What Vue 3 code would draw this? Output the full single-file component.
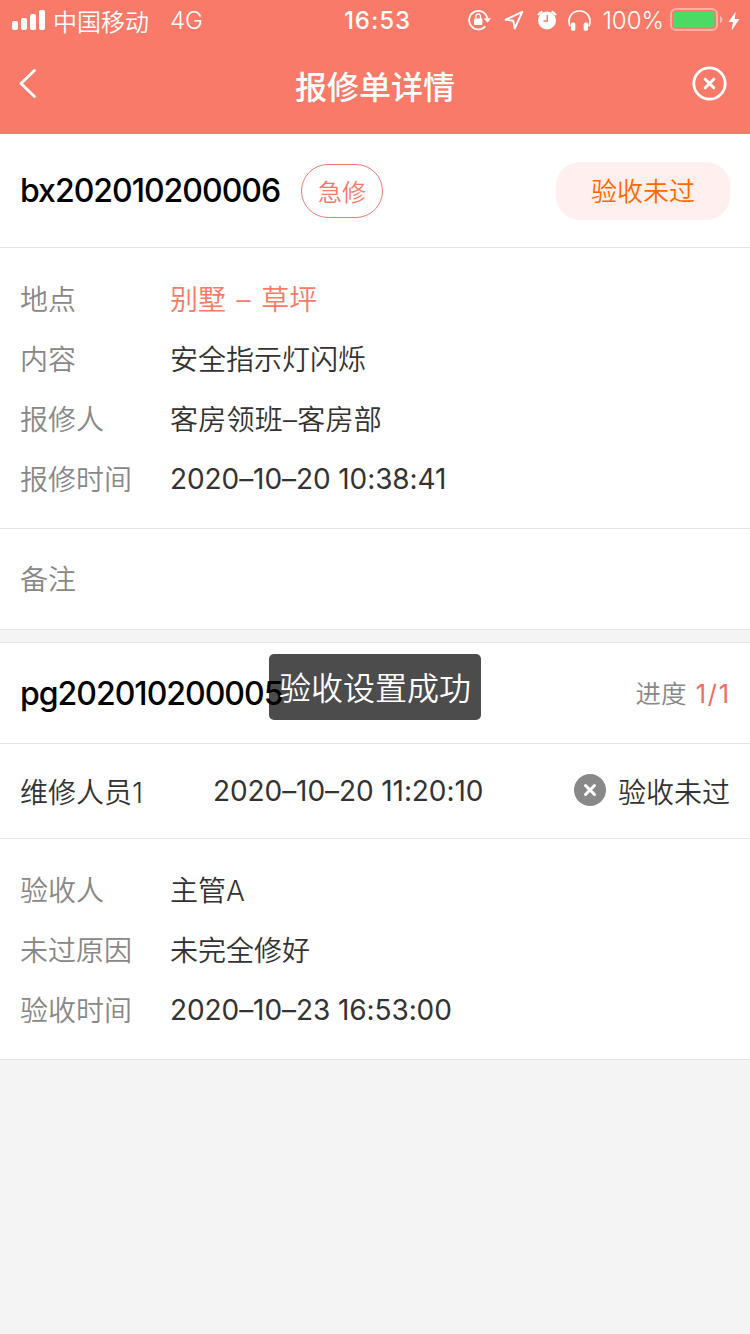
<script setup>
import { ref } from 'vue'

const order = ref({
  no: 'bx202010200006',
  level: '急修',
  status: '验收未过',
  remarkLabel: '备注'
})

const orderInfo = ref([
  { label: '地点', value: '别墅 – 草坪', type: 'link' },
  { label: '内容', value: '安全指示灯闪烁' },
  { label: '报修人', value: '客房领班–客房部', type: 'person' },
  { label: '报修时间', value: '2020–10–20 10:38:41', type: 'num' }
])

const dispatch = ref({
  no: 'pg202010200005',
  progress: '1/1',
  time: '2020–10–20 11:20:10',
  result: '验收未过'
})

const checkInfo = ref([
  { label: '验收人', value: '主管A' },
  { label: '未过原因', value: '未完全修好' },
  { label: '验收时间', value: '2020–10–23 16:53:00', type: 'num' }
])

const toast = ref('验收设置成功')
</script>

<template>
  <div class="page">
    <header class="header">
      <div class="status-bar">
        <div class="status-left">
          <svg class="signal" width="34" height="20" viewBox="0 0 34 20" fill="#fff">
            <rect x="0" y="11" width="6" height="9" rx="2" />
            <rect x="9" y="8" width="6" height="12" rx="2" />
            <rect x="18" y="4" width="6" height="16" rx="2" />
            <rect x="27" y="0" width="6" height="20" rx="2" />
          </svg>
          <span class="carrier">中国移动</span>
          <span class="network">4G</span>
        </div>
        <div class="clock">16:53</div>
        <div class="status-right">
          <!-- rotation lock -->
          <svg class="lock" width="23" height="22" viewBox="0 0 23 22">
            <path d="M17.200 17.300A9.200 9.200 0 1 1 19.400 9.500" fill="none" stroke="#fff" stroke-width="1.800" />
            <path d="M15.800 9.200h7.200l-3.600 4.500z" fill="#fff" />
            <rect x="6" y="9.500" width="8.400" height="6.500" rx="1" fill="#fff" />
            <path d="M7.900 9.800V7.300a2.300 2.300 0 0 1 4.600 0V9.800" fill="none" stroke="#fff" stroke-width="1.400" />
          </svg>
          <!-- location -->
          <svg class="location" width="20" height="20" viewBox="0 0 20 20">
            <path d="M18.200 1.800L1.600 9.700L9.300 10.700L10.800 18.400Z" fill="none" stroke="#fff" stroke-width="2" stroke-linejoin="round" />
          </svg>
          <!-- alarm -->
          <svg class="alarm" width="20" height="20" viewBox="0 0 20 20">
            <circle cx="10" cy="10.500" r="9" fill="#fff" />
            <path d="M1 5.200A12 12 0 0 1 5.400 1.500M14.600 1.500A12 12 0 0 1 19 5.200" fill="none" stroke="#fff" stroke-width="2.200" />
            <path d="M10.300 5v6H6.500" fill="none" stroke="#fa7a69" stroke-width="1.500" />
          </svg>
          <!-- headphones -->
          <svg class="headphones" width="23" height="21" viewBox="0 0 23 21">
            <path d="M2.200 16.500C-1.500 8 4 1 11.500 1S24.500 8 20.800 16.500" fill="none" stroke="#fff" stroke-width="1.700" />
            <rect x="3" y="12.500" width="4.300" height="8.300" rx="1.500" fill="#fff" />
            <rect x="15.700" y="12.500" width="4.300" height="8.300" rx="1.500" fill="#fff" />
          </svg>
          <span class="percent">100%</span>
          <svg class="battery" width="53" height="24" viewBox="0 0 53 24">
            <rect x="1" y="1" width="46" height="21" rx="5" fill="none" stroke="#fff" stroke-opacity="0.4" stroke-width="2" />
            <rect x="3.500" y="3.500" width="41" height="16" rx="2.500" fill="#4cd964" />
            <path d="M50 8c3 1 3 6 0 7z" fill="#fff" fill-opacity="0.5" />
          </svg>
          <svg class="bolt" width="12" height="20" viewBox="0 0 12 20">
            <path d="M7.800 0.500L0.500 11H5L3.500 19.500L11.500 8H6.600z" fill="#fff" />
          </svg>
        </div>
      </div>
      <div class="nav">
        <svg class="back" width="20" height="32" viewBox="0 0 20 32">
          <path d="M17.500 2.500L4 15.500L17.500 28.500" fill="none" stroke="#fff" stroke-width="2.800" stroke-linecap="round" stroke-linejoin="round" />
        </svg>
        <h1 class="title">报修单详情</h1>
        <svg class="close" width="36" height="36" viewBox="0 0 36 36">
          <circle cx="17.500" cy="17.500" r="15.700" fill="none" stroke="#fff" stroke-width="2.800" />
          <path d="M13.200 13.200L21.800 21.800M21.800 13.200L13.200 21.800" stroke="#fff" stroke-width="3" stroke-linecap="round" />
        </svg>
      </div>
    </header>

    <section class="order-head">
      <span class="order-no">{{ order.no }}</span>
      <span class="level">{{ order.level }}</span>
      <span class="status">{{ order.status }}</span>
    </section>

    <section class="info">
      <div v-for="item in orderInfo" :key="item.label" class="info-row">
        <span class="label">{{ item.label }}</span>
        <span class="value" :class="item.type">{{ item.value }}</span>
      </div>
    </section>

    <section class="remark">
      <span class="label">{{ order.remarkLabel }}</span>
    </section>

    <section class="dispatch-head">
      <span class="order-no">{{ dispatch.no }}</span>
      <span class="progress">进度 <em>{{ dispatch.progress }}</em></span>
    </section>

    <section class="worker">
      <span class="worker-name">维修人员1</span>
      <span class="worker-time num">{{ dispatch.time }}</span>
      <svg class="fail" width="32" height="32" viewBox="0 0 32 32">
        <circle cx="16" cy="16" r="16" fill="#888" />
        <path d="M11.500 11.500L20.500 20.500M20.500 11.500L11.500 20.500" stroke="#fff" stroke-width="3" stroke-linecap="round" />
      </svg>
      <span class="result">{{ dispatch.result }}</span>
    </section>

    <section class="info">
      <div v-for="item in checkInfo" :key="item.label" class="info-row">
        <span class="label">{{ item.label }}</span>
        <span class="value" :class="item.type">{{ item.value }}</span>
      </div>
    </section>

    <div v-if="toast" class="toast">{{ toast }}</div>
  </div>
</template>

<style>
body {
  margin: 0;
  background: #f4f4f4;
}
</style>

<style scoped>
.page {
  position: relative;
  min-height: 1334px;
  box-sizing: border-box;
  background: #f4f4f4;
  font-family: Inter, 'Noto Sans CJK SC', sans-serif;
  font-size: 28px;
  font-weight: 350;
  color: #333;
  overflow: hidden;
  white-space: nowrap;
}

.page * {
  box-sizing: border-box;
}

svg {
  display: block;
  flex: none;
}

.header {
  height: 134px;
  background: #fa7a69;
  color: #fff;
}

.status-bar {
  display: grid;
  grid-template-columns: 1fr auto 1fr;
  align-items: center;
  height: 41px;
  padding: 0 10px 0 12px;
  font-size: 24px;
}

.status-left,
.status-right {
  display: flex;
  align-items: center;
}

.status-right {
  justify-content: flex-end;
}

.signal {
  margin-bottom: 1px;
}

.lock,
.location,
.alarm,
.headphones {
  margin-bottom: 1px;
}

.carrier {
  margin-left: 7px;
  padding-bottom: 1px;
}

.network {
  margin-left: 21px;
}

.clock {
  padding-left: 3px;
  font-weight: 500;
  letter-spacing: 1px;
}

.location {
  margin-left: 13px;
}

.alarm {
  margin-left: 13px;
}

.headphones {
  margin-left: 11px;
}

.percent {
  margin-left: 11px;
}

.battery {
  margin: 0 0 1px 6px;
}

.bolt {
  margin-left: 5px;
}

.nav {
  display: grid;
  grid-template-columns: 1fr auto 1fr;
  align-items: center;
  height: 93px;
  padding: 0 22px 7px 17px;
}

.title {
  margin: 0 0 0 5px;
  padding-top: 1px;
  font-size: 32px;
  font-weight: 500;
}

.close {
  justify-self: end;
}

.order-head,
.info,
.remark,
.dispatch-head,
.worker {
  background: #fff;
  border-bottom: 1px solid #e4e4e4;
}

.order-head {
  display: flex;
  align-items: center;
  height: 114px;
  padding: 0 20px;
}

.order-no {
  font-size: 32px;
  font-weight: 500;
  letter-spacing: -1px;
  color: #000;
}

.level {
  display: flex;
  align-items: center;
  justify-content: center;
  width: 82px;
  height: 54px;
  margin-left: 21px;
  padding-bottom: 1px;
  border: 1px solid #f07b74;
  border-radius: 27px;
  font-size: 24px;
  color: #fa7a69;
}

.status {
  display: flex;
  align-items: center;
  justify-content: center;
  width: 174px;
  height: 58px;
  margin-left: auto;
  padding-bottom: 2px;
  border-radius: 24px;
  background: #fff0ef;
  font-size: 26px;
  color: #ff6a00;
}

.info {
  padding: 21px 20px 19px;
}

.info-row {
  display: flex;
  align-items: center;
  height: 60px;
}

.label {
  width: 150px;
  padding-bottom: 2px;
  color: #888;
}

.value {
  padding-bottom: 2px;
}

.num {
  padding-bottom: 0;
  font-weight: 400;
  letter-spacing: -0.08px;
}

.link {
  color: #fa7a69;
  word-spacing: 2.7px;
}

.person {
  letter-spacing: 0.25px;
}

.remark {
  display: flex;
  align-items: center;
  height: 101px;
  padding: 0 20px;
}

.dispatch-head {
  display: flex;
  align-items: center;
  justify-content: space-between;
  height: 102px;
  margin-top: 12px;
  padding: 0 20px;
  border-top: 1px solid #e4e4e4;
}

.progress {
  padding-bottom: 3px;
  font-size: 25.5px;
  word-spacing: 2px;
  color: #888;
}

.progress em {
  margin-right: -1px;
  font-style: normal;
  font-weight: 400;
  letter-spacing: 1.8px;
  color: #fa6a60;
}

.worker {
  display: flex;
  align-items: center;
  height: 95px;
  padding: 0 20px;
}

.worker-name {
  width: 193px;
  padding-bottom: 1px;
}

.fail {
  margin: 0 12px 2px auto;
}

.result {
  padding-bottom: 1px;
}

/* message floating over the page */
.toast {
  position: absolute;
  top: 654px;
  left: 50%;
  display: flex;
  align-items: center;
  justify-content: center;
  width: 212px;
  height: 66px;
  padding-bottom: 3px;
  transform: translateX(-50%);
  border-radius: 5px;
  background: rgba(0, 0, 0, 0.7);
  font-size: 32px;
  color: #fff;
}
</style>
